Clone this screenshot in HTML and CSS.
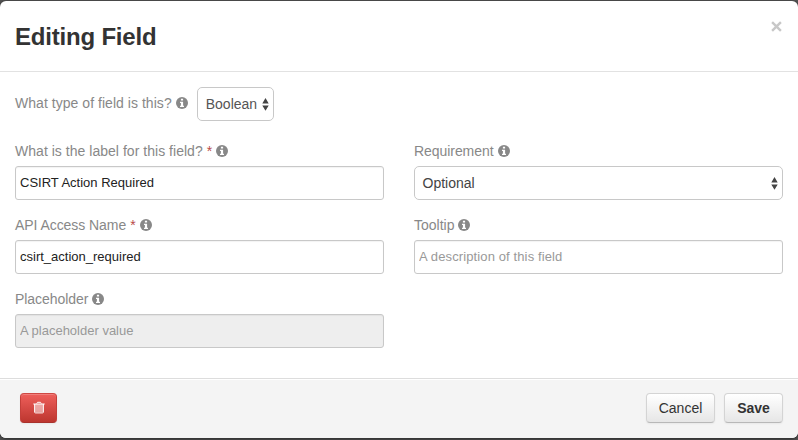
FILE: index.html
```html
<!DOCTYPE html>
<html lang="en">
<head>
<meta charset="utf-8">
<title>Editing Field</title>
<link rel="stylesheet" href="styles.css">
</head>
<body>
<svg class="defs" aria-hidden="true">
  <symbol id="info" viewBox="0 0 12 12">
    <circle cx="6" cy="6" r="6" fill="#888"/>
    <path d="M4.9 1.7h2.2v1.9H4.9zM4 4.7h3.1v4h.9V10H4V8.7h.9V6H4z" fill="#fff"/>
  </symbol>
  <symbol id="arrows" viewBox="0 0 7 13">
    <path d="M3.5 0L6.7 5.4H.3zM.3 7.4h6.4L3.5 12.8z" fill="#444"/>
  </symbol>
</svg>
<main class="modal">
  <header class="modal-header">
    <h1>Editing Field</h1>
    <button class="close" aria-label="Close"><svg viewBox="0 0 10 10"><path d="M1 1l8 8M9 1L1 9"/></svg></button>
  </header>
  <section class="modal-body">
    <div class="type-row">
      <label>What type of field is this? <svg class="info"><use href="#info"/></svg></label>
      <div class="select small"><span>Boolean</span><svg class="arrows"><use href="#arrows"/></svg></div>
    </div>
    <div class="fields">
      <div class="field">
        <label class="wide">What is the label for this field? <b>*</b> <svg class="info"><use href="#info"/></svg></label>
        <input type="text" value="CSIRT Action Required">
      </div>
      <div class="field">
        <label class="tight">Requirement <svg class="info"><use href="#info"/></svg></label>
        <div class="select"><span>Optional</span><svg class="arrows"><use href="#arrows"/></svg></div>
      </div>
      <div class="field">
        <label class="tight">API Access Name <b>*</b> <svg class="info"><use href="#info"/></svg></label>
        <input type="text" value="csirt_action_required">
      </div>
      <div class="field">
        <label>Tooltip <svg class="info"><use href="#info"/></svg></label>
        <input class="long" type="text" placeholder="A description of this field">
      </div>
      <div class="field">
        <label class="tight">Placeholder <svg class="info"><use href="#info"/></svg></label>
        <input type="text" placeholder="A placeholder value" disabled>
      </div>
    </div>
  </section>
  <footer class="modal-footer">
    <button class="btn danger" aria-label="Delete"><svg viewBox="0 0 12 13"><path d="M2 3h8v8H2z" fill="#fff" fill-opacity=".5"/><path d="M.3 3h11.4M3.7 2.6l.8-1.3h3l.8 1.3M1.6 3v8q0 .9.9.9h7q.9 0 .9-.9V3" fill="none" stroke="#fff"/></svg></button>
    <button class="btn cancel">Cancel</button>
    <button class="btn save">Save</button>
  </footer>
</main>
</body>
</html>
```
FILE: styles.css
```css
* { box-sizing: border-box; }
body {
  margin: 0;
  height: 440px;
  padding-top: 1px;
  overflow: hidden;
  background: #555;
  font: 14px/20px "Liberation Sans", Arial, sans-serif;
  color: #333;
}
.defs { position: absolute; width: 0; height: 0; }
.modal {
  height: 437px;
  display: flex;
  flex-direction: column;
  background: #fff;
  border-radius: 6px;
  overflow: hidden;
  box-shadow: 0 1px 4px rgba(0, 0, 0, .6);
}
.modal-header {
  height: 71px;
  display: flex;
  justify-content: space-between;
  padding: 16px 15px 0;
  border-bottom: 1px solid #e2e2e2;
}
h1 { margin: 0; font-size: 24px; line-height: 40px; letter-spacing: -.2px; }
.close {
  width: 12px;
  height: 20px;
  padding: 0;
  border: 0;
  background: none;
}
.close svg { display: block; width: 11px; height: 11px; margin-top: -2px; }
.close path { stroke: #c8c8c8; stroke-width: 2.2; }
.modal-body { height: 306px; padding: 15px 15px 0; }
.type-row { display: flex; height: 34px; }
label {
  display: flex;
  align-items: center;
  gap: 4px;
  height: 20px;
  color: #888;
  white-space: nowrap;
}
.type-row label { margin-top: 6px; letter-spacing: .04px; }
label.wide { letter-spacing: .03px; }
label.tight { letter-spacing: -.06px; }
label b { color: #b94a48; font-weight: normal; }
.info { width: 12px; height: 12px; }
.select {
  display: flex;
  align-items: center;
  justify-content: space-between;
  height: 34px;
  padding: 0 4px 0 8px;
  border: 1px solid #c8c8c8;
  border-radius: 5px;
  background: #fff;
  color: #555;
}
.select.small { width: 77px; margin-left: 9px; }
.arrows { width: 7px; height: 13px; }
.fields {
  display: grid;
  grid-template-columns: 1fr 1fr;
  column-gap: 30px;
  row-gap: 15px;
  margin-top: 20px;
}
.field { height: 59px; }
.field label { margin-bottom: 5px; }
.field .select { padding-left: 7.5px; color: #444; }
input {
  display: block;
  width: 100%;
  height: 34px;
  padding: 0 4px 2px;
  border: 1px solid #c8c8c8;
  border-radius: 3px;
  box-shadow: inset 0 1px 1px rgba(0, 0, 0, .05);
  background: #fff;
  color: #222;
  font: 13px "Liberation Sans", Arial, sans-serif;
}
input.long { letter-spacing: .12px; }
input:disabled { background: #eee; }
input::placeholder { color: #999; opacity: 1; }
.modal-footer {
  flex: 1;
  display: flex;
  align-items: flex-start;
  gap: 9px;
  padding: 14px 15px 0 20px;
  border-top: 1px solid #ddd;
  background: #f4f4f4;
  box-shadow: inset 0 1px 0 #fff;
}
.btn {
  height: 30px;
  padding: 0;
  border: 1px solid #d4d4d4;
  border-bottom-color: #b8b8b8;
  border-radius: 4px;
  background: linear-gradient(#fff, #e6e6e6);
  box-shadow: inset 0 1px 0 rgba(255, 255, 255, .2), 0 1px 2px rgba(0, 0, 0, .05);
  color: #333;
  font: 14px/20px "Liberation Sans", Arial, sans-serif;
}
.danger {
  width: 37px;
  margin-right: auto;
  border-color: #cf4843 #c43f3a #a9322c;
  background: linear-gradient(#ee5f5b, #bd362f);
}
.danger svg { display: block; width: 12px; height: 13px; margin: -1px auto 0; }
.cancel { width: 69px; }
.save { width: 59px; font-weight: bold; }
```
